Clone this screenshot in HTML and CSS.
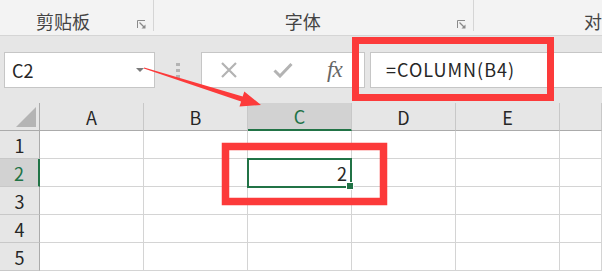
FILE: index.html
```html
<!DOCTYPE html>
<html lang="zh-CN">
<head>
    <meta charset="UTF-8">
    <title>COLUMN</title>
    <link rel="stylesheet" href="styles.css">
</head>
<body>
    <div class="ribbon">
        <div class="group g-clip">
            <span class="label">剪贴板</span>
            <svg class="launch" width="9" height="9" viewBox="0 0 9 9"><path d="M0.5 8V0.5H8" fill="none" stroke="#8a8a8a"/><path d="M2.5 2.5L7 7" stroke="#8a8a8a" stroke-width="1.2"/><path d="M8.5 4.5V8.5H4.5Z" fill="#8a8a8a"/></svg>
        </div>
        <div class="group g-font">
            <span class="label">字体</span>
            <svg class="launch" width="9" height="9" viewBox="0 0 9 9"><path d="M0.5 8V0.5H8" fill="none" stroke="#8a8a8a"/><path d="M2.5 2.5L7 7" stroke="#8a8a8a" stroke-width="1.2"/><path d="M8.5 4.5V8.5H4.5Z" fill="#8a8a8a"/></svg>
        </div>
        <div class="group g-align">
            <span class="label">对</span>
        </div>
    </div>

    <div class="fbar">
        <div class="namebox">
            <span>C2</span>
            <span class="caret"></span>
        </div>
        <div class="grip"><i></i><i></i><i></i></div>
        <div class="fbtns">
            <svg class="btn" width="18" height="16" viewBox="0 0 18 16"><path d="M2 1L16 15M16 1L2 15" stroke="#b3b3b3" stroke-width="2.2"/></svg>
            <svg class="btn" width="20" height="16" viewBox="0 0 20 16"><path d="M1.5 8.5L7 14L18.5 2" fill="none" stroke="#b3b3b3" stroke-width="3"/></svg>
            <span class="fx">fx</span>
        </div>
        <div class="finput">=COLUMN(B4)</div>
    </div>

    <div class="sheet">
        <div class="grid">
            <div class="hd corner"><span class="tri"></span></div>
            <div class="hd col">A</div>
            <div class="hd col">B</div>
            <div class="hd col sel">C</div>
            <div class="hd col">D</div>
            <div class="hd col">E</div>
            <div class="hd col"></div>

            <div class="hd row">1</div>
            <div class="cell"></div><div class="cell"></div><div class="cell"></div><div class="cell"></div><div class="cell"></div><div class="cell"></div>

            <div class="hd row sel">2</div>
            <div class="cell"></div><div class="cell"></div><div class="cell num">2</div><div class="cell"></div><div class="cell"></div><div class="cell"></div>

            <div class="hd row">3</div>
            <div class="cell"></div><div class="cell"></div><div class="cell"></div><div class="cell"></div><div class="cell"></div><div class="cell"></div>

            <div class="hd row">4</div>
            <div class="cell"></div><div class="cell"></div><div class="cell"></div><div class="cell"></div><div class="cell"></div><div class="cell"></div>

            <div class="hd row">5</div>
            <div class="cell"></div><div class="cell"></div><div class="cell"></div><div class="cell"></div><div class="cell"></div><div class="cell"></div>
        </div>
        <div class="active"><span class="handle"></span></div>
    </div>

    <!-- red annotation marks drawn over the screenshot -->
    <svg class="marks" width="602" height="273" viewBox="0 0 602 273">
        <rect x="355.5" y="40.5" width="195" height="57" fill="none" stroke="#fc3a3a" stroke-width="7"/>
        <rect x="225.5" y="146.5" width="158" height="55" fill="none" stroke="#fc3a3a" stroke-width="7.5"/>
        <polygon points="144.2,67.4 242.7,96.6 244.3,91.4 261,105 239.5,106.6 241.1,101.4 143.8,68.6" fill="#fc3a3a"/>
    </svg>
</body>
</html>
```

FILE: styles.css
```css
body {
    margin: 0;
    width: 602px;
    height: 273px;
    overflow: hidden;
    position: relative;
    font-family: "Noto Sans CJK SC", "Liberation Sans", sans-serif;
    color: #262626;
    background: #fff;
}

/* ribbon */
.ribbon {
    display: flex;
    height: 35px;
    background: #f3f3f3;
    border-bottom: 1px solid #d5d5d5;
}

.group {
    display: flex;
    align-items: flex-end;
    height: 31px;
    border-right: 1px solid #d5d5d5;
    box-sizing: border-box;
}

.label {
    font-size: 18px;
    line-height: 20px;
    color: #444;
}

.launch {
    margin-left: auto;
    margin-right: 7px;
    margin-bottom: 2px;
}

.g-clip {
    width: 155px;
    padding-left: 36px;
}

.g-font {
    width: 322px;
    padding-left: 131px;
}

.g-align {
    flex: 1;
    border-right: none;
    padding-left: 110px;
}

/* formula bar */
.fbar {
    display: flex;
    height: 67px;
    box-sizing: border-box;
    padding-top: 16px;
    background: #e6e6e6;
}

.namebox {
    display: flex;
    align-items: center;
    margin-left: 4px;
    width: 151px;
    height: 36px;
    box-sizing: border-box;
    border: 1px solid #c6c6c6;
    background: #fff;
    padding-left: 7px;
    font-size: 18px;
}

.caret {
    margin-left: auto;
    margin-right: 10px;
    border-left: 4px solid transparent;
    border-right: 4px solid transparent;
    border-top: 4px solid #7a7a7a;
}

.grip {
    width: 46px;
    display: flex;
    flex-direction: column;
    align-items: center;
    justify-content: center;
    gap: 3px;
    height: 36px;
}

.grip i {
    display: block;
    width: 4px;
    height: 3px;
    background: #b4b4b4;
}

.fbtns {
    display: flex;
    align-items: center;
    width: 164px;
    height: 36px;
    box-sizing: border-box;
    border: 1px solid #c6c6c6;
    background: #fff;
    padding-left: 18px;
}

.btn {
    margin-right: 35px;
}

.btn + .btn {
    margin-right: 34px;
}

.fx {
    font-family: "Liberation Serif", serif;
    font-style: italic;
    font-size: 23px;
    color: #666;
    letter-spacing: -1px;
}

.finput {
    flex: 1;
    margin-left: 5px;
    height: 36px;
    box-sizing: border-box;
    border: 1px solid #c6c6c6;
    border-right: none;
    background: #fff;
    padding-left: 15px;
    font-size: 18px;
    line-height: 33px;
    letter-spacing: 1px;
}

/* sheet */
.sheet {
    position: relative;
    background: #e6e6e6;
}

.grid {
    display: grid;
    grid-template-columns: 40px repeat(5, 104px) 42px;
    grid-auto-rows: 28px;
}

.hd {
    display: flex;
    align-items: center;
    justify-content: center;
    background: #e6e6e6;
    font-size: 18px;
    box-sizing: border-box;
}

.col {
    border-right: 1px solid #c8c8c8;
    border-bottom: 1px solid #ababab;
}

.corner {
    position: relative;
    border-right: 1px solid #ababab;
    border-bottom: 1px solid #ababab;
}

.tri {
    position: absolute;
    right: 3px;
    bottom: 3px;
    width: 0;
    height: 0;
    border-left: 20px solid transparent;
    border-bottom: 20px solid #b4b4b4;
}

.row {
    border-right: 1px solid #ababab;
    border-bottom: 1px solid #c8c8c8;
}

.col.sel {
    background: #d2d2d2;
    color: #217346;
    border-bottom: 2px solid #217346;
}

.row.sel {
    background: #d2d2d2;
    color: #217346;
    border-right: 2px solid #217346;
}

.cell {
    background: #fff;
    border-right: 1px solid #d4d4d4;
    border-bottom: 1px solid #d4d4d4;
    box-sizing: border-box;
}

.num {
    display: flex;
    align-items: center;
    justify-content: flex-end;
    padding-right: 4px;
    font-size: 18px;
}

.active {
    position: absolute;
    left: 247px;
    top: 55px;
    width: 105px;
    height: 30px;
    box-sizing: border-box;
    border: 2px solid #217346;
}

.handle {
    position: absolute;
    right: -4px;
    bottom: -4px;
    width: 6px;
    height: 6px;
    background: #217346;
    border: 1px solid #fff;
}

.marks {
    position: absolute;
    top: 0;
    left: 0;
}
```
